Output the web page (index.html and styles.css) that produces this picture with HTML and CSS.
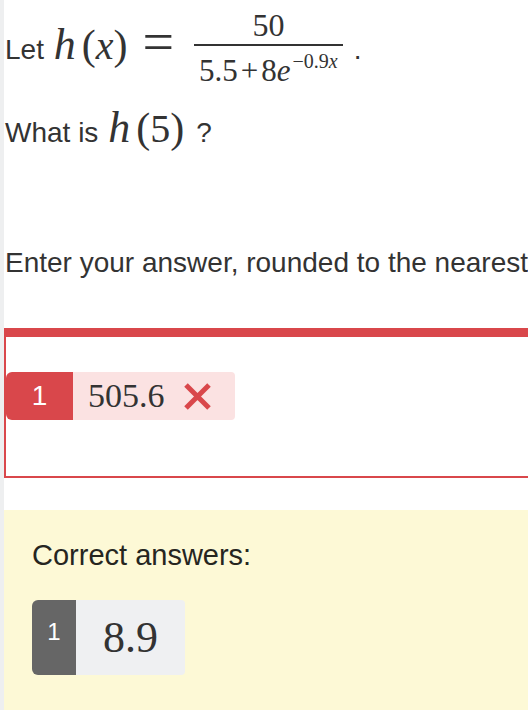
FILE: index.html
```html
<!DOCTYPE html>
<html>
<head>
<meta charset="utf-8">
<link rel="stylesheet" href="styles.css">
</head>
<body>
<div class="page">
  <div class="line line1">Let <span class="mi h1">h</span><span class="mo paren">(</span><span class="mi">x</span><span class="mo paren">)</span><span class="mo eq">=</span><span class="frac"><span class="num">50</span><span class="den">5.5<span class="plus">+</span>8<span class="mi">e</span><span class="sup">−0.9<span class="mi">x</span></span></span></span><span class="dot">.</span></div>
  <div class="line line2">What is <span class="mi h2">h</span><span class="mo paren">(</span><span class="mo">5</span><span class="mo paren">)</span><span class="q">?</span></div>
  <div class="line line3">Enter your answer, rounded to the nearest</div>

  <div class="answer-box">
    <div class="chip chip-wrong">
      <span class="chip-num">1</span>
      <span class="chip-val">505.6<svg class="xmark" width="29" height="27" viewBox="0 0 29 27"><path d="M3 2 L26 25 M26 2 L3 25" stroke="#d9474b" stroke-width="5" stroke-linecap="butt"/></svg></span>
    </div>
  </div>

  <div class="correct">
    <div class="correct-title">Correct answers:</div>
    <div class="chip chip-right">
      <span class="chip-num">1</span>
      <span class="chip-val">8.9</span>
    </div>
  </div>
</div>
</body>
</html>
```

FILE: styles.css
```css
html, body {
  margin: 0;
  padding: 0;
  background: #ffffff;
  overflow: hidden;
}
.page {
  border-left: 4px solid #eeeff0;
  min-height: 710px;
  font-family: "Liberation Sans", Arial, sans-serif;
  color: #333333;
  font-size: 28px;
}
.line {
  padding-left: 1px;
  white-space: nowrap;
}
.line1 {
  height: 96px;
  padding-top: 10px;
  line-height: 40px;
}
.line2 {
  height: 140px;
  padding-top: 2px;
  line-height: 40px;
}
.line3 {
  height: 80px;
  line-height: 30px;
}
.mi {
  font-family: "Liberation Serif", "Times New Roman", serif;
  font-style: italic;
  font-size: 40px;
}
.mo {
  font-family: "Liberation Serif", "Times New Roman", serif;
  font-size: 40px;
}
.h1, .h2 {
  font-size: 44px;
  margin-left: 2px;
  margin-right: 6px;
}
.paren {
  font-size: 42px;
}
.eq {
  font-size: 56px;
  margin-left: 15px;
  margin-right: 20px;
  vertical-align: -2px;
}
.frac {
  display: inline-block;
  vertical-align: -22px;
  text-align: center;
  font-family: "Liberation Serif", "Times New Roman", serif;
  line-height: 30px;
}
.num {
  display: block;
  font-size: 32px;
  border-bottom: 2px solid #333333;
  padding-bottom: 4px;
}
.den {
  display: block;
  font-size: 31px;
  padding: 0 5px;
}
.plus {
  margin: 0 3px;
}
.den .mi {
  font-size: 31px;
}
.sup {
  font-size: 20px;
  vertical-align: 13px;
  margin-left: 2px;
}
.sup .mi {
  font-size: 20px;
}
.dot {
  margin-left: 11px;
}
.q {
  margin-left: 12px;
}
.answer-box {
  border-top: 9px solid #d9474b;
  border-left: 2px solid #d9474b;
  border-bottom: 2px solid #d9474b;
  padding: 35px 0 56px 0;
}
.chip {
  display: flex;
  align-items: stretch;
}
.chip-wrong {
  height: 48px;
}
.chip-wrong .chip-num {
  width: 67px;
  background: #d9474b;
  color: #ffffff;
  border-radius: 6px 0 0 6px;
  font-size: 28px;
  display: flex;
  align-items: center;
  justify-content: center;
}
.chip-wrong .chip-val {
  display: flex;
  align-items: center;
  background: #fbe2e2;
  border-radius: 0 4px 4px 0;
  padding: 0 23px 0 15px;
  font-family: "Liberation Serif", "Times New Roman", serif;
  font-size: 34px;
  color: #333333;
}
.xmark {
  margin-left: 18px;
}
.correct {
  margin-top: 32px;
  background: #fdf9d6;
  padding: 30px 0 40px 28px;
  min-height: 160px;
}
.correct-title {
  color: #26261f;
  font-size: 29px;
  line-height: 30px;
  margin-bottom: 30px;
}
.chip-right {
  height: 75px;
  width: 153px;
}
.chip-right .chip-num {
  width: 44px;
  background: #666666;
  color: #ffffff;
  border-radius: 6px 0 0 6px;
  font-size: 24px;
  text-align: center;
  padding-top: 18px;
  box-sizing: border-box;
}
.chip-right .chip-val {
  flex: 1;
  background: #eff0f2;
  border-radius: 0 4px 4px 0;
  font-family: "Liberation Serif", "Times New Roman", serif;
  font-size: 44px;
  padding-left: 27px;
  display: flex;
  align-items: center;
  color: #333333;
}
```
